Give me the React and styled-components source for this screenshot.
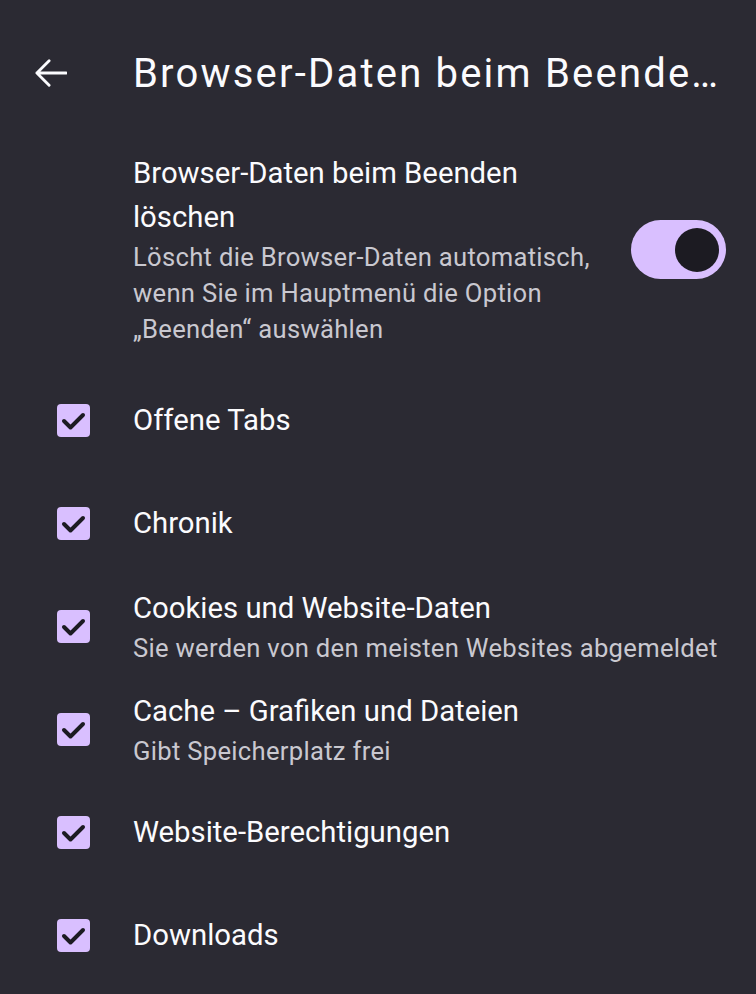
import React, { useState } from 'react';
import styled, { createGlobalStyle } from 'styled-components';

const GlobalStyle = createGlobalStyle`
  html, body {
    margin: 0;
    padding: 0;
    background-color: #2b2a33;
  }

  body {
    font-family: Roboto, "Noto Sans", sans-serif;
    color: #fbfbfe;
    -webkit-font-smoothing: antialiased;
  }
`;

const Screen = styled.div`
  width: 756px;
  min-height: 994px;
  background-color: #2b2a33;
  overflow: hidden;
`;

const TopBar = styled.header`
  height: 146px;
  display: flex;
  align-items: center;
  padding-left: 35px;
  padding-right: 34px;
  box-sizing: border-box;
`;

const BackButton = styled.button`
  width: 32px;
  height: 32px;
  padding: 0;
  margin-right: 66px;
  background: none;
  border: none;
  color: #fbfbfe;
  display: flex;
  align-items: center;
  justify-content: center;
  cursor: pointer;
  flex-shrink: 0;
`;

const Title = styled.h1`
  margin: 0;
  flex: 1;
  min-width: 0;
  font-size: 40px;
  font-weight: 400;
  letter-spacing: 2.2px;
  white-space: nowrap;
  overflow: hidden;
  text-overflow: ellipsis;
`;

const MasterRow = styled.div`
  display: flex;
  align-items: center;
  padding: 6px 30px 0 133px;
`;

const MasterText = styled.div`
  flex: 1;
  min-width: 0;
  margin-right: 24px;
`;

const PrimaryText = styled.div`
  font-size: 29.3px;
  line-height: 43.5px;
  color: #fbfbfe;
`;

const SecondaryText = styled.div`
  font-size: 25.6px;
  line-height: 36px;
  letter-spacing: 0.3px;
  color: #c9c8d0;
`;

const SwitchTrack = styled.button`
  width: 95px;
  height: 59px;
  border-radius: 30px;
  border: none;
  padding: 0 7px;
  background-color: ${(p) => (p.$on ? '#d9bfff' : '#49454f')};
  display: flex;
  align-items: center;
  justify-content: ${(p) => (p.$on ? 'flex-end' : 'flex-start')};
  flex-shrink: 0;
  cursor: pointer;
`;

const SwitchThumb = styled.span`
  width: 44px;
  height: 44px;
  border-radius: 50%;
  background-color: #1c1b22;
`;

const OptionList = styled.ul`
  list-style: none;
  margin: 22px 0 0;
  padding: 0;
`;

const OptionRow = styled.li`
  height: 103px;
  display: flex;
  align-items: center;
  padding-left: 57px;
  padding-right: 20px;
  cursor: pointer;
`;

const CheckBox = styled.span`
  width: 33px;
  height: 33px;
  border-radius: 4px;
  background-color: ${(p) => (p.$checked ? '#d9bfff' : 'transparent')};
  border: ${(p) => (p.$checked ? 'none' : '3px solid #c9c8d0')};
  box-sizing: border-box;
  margin-right: 43px;
  flex-shrink: 0;
  display: flex;
`;

const OptionText = styled.div`
  min-width: 0;
  white-space: nowrap;
`;

const ArrowBack = () => (
  <svg width="34" height="30" viewBox="0 0 34 30" fill="none">
    <path
      d="M33 15H2M15 2L2 15l13 13"
      stroke="currentColor"
      strokeWidth="3"
      strokeLinecap="round"
      strokeLinejoin="round"
    />
  </svg>
);

const CheckMark = () => (
  <svg width="33" height="33" viewBox="0 0 33 33" fill="none">
    <path
      d="M7 17l6.5 6.5L26 11"
      stroke="#1c1b22"
      strokeWidth="4"
      strokeLinecap="round"
      strokeLinejoin="round"
    />
  </svg>
);

const options = [
  { id: 'tabs', label: 'Offene Tabs' },
  { id: 'history', label: 'Chronik' },
  {
    id: 'cookies',
    label: 'Cookies und Website-Daten',
    summary: 'Sie werden von den meisten Websites abgemeldet',
  },
  {
    id: 'cache',
    label: 'Cache – Grafiken und Dateien',
    summary: 'Gibt Speicherplatz frei',
  },
  { id: 'permissions', label: 'Website-Berechtigungen' },
  { id: 'downloads', label: 'Downloads' },
];

const App = () => {
  const [enabled, setEnabled] = useState(true);
  const [checked, setChecked] = useState(
    Object.fromEntries(options.map((o) => [o.id, true]))
  );

  const toggleOption = (id) => {
    setChecked({ ...checked, [id]: !checked[id] });
  };

  return (
    <Screen>
      <GlobalStyle />
      <TopBar>
        <BackButton aria-label="Zurück">
          <ArrowBack />
        </BackButton>
        <Title>Browser-Daten beim Beenden löschen</Title>
      </TopBar>

      <MasterRow>
        <MasterText>
          <PrimaryText>Browser-Daten beim Beenden löschen</PrimaryText>
          <SecondaryText>
            Löscht die Browser-Daten automatisch, wenn Sie im Hauptmenü die
            Option „Beenden“ auswählen
          </SecondaryText>
        </MasterText>
        <SwitchTrack $on={enabled} onClick={() => setEnabled(!enabled)}>
          <SwitchThumb />
        </SwitchTrack>
      </MasterRow>

      <OptionList>
        {options.map((o) => (
          <OptionRow key={o.id} onClick={() => toggleOption(o.id)}>
            <CheckBox $checked={checked[o.id]}>
              {checked[o.id] && <CheckMark />}
            </CheckBox>
            <OptionText>
              <PrimaryText>{o.label}</PrimaryText>
              {o.summary && <SecondaryText>{o.summary}</SecondaryText>}
            </OptionText>
          </OptionRow>
        ))}
      </OptionList>
    </Screen>
  );
};

export default App;
